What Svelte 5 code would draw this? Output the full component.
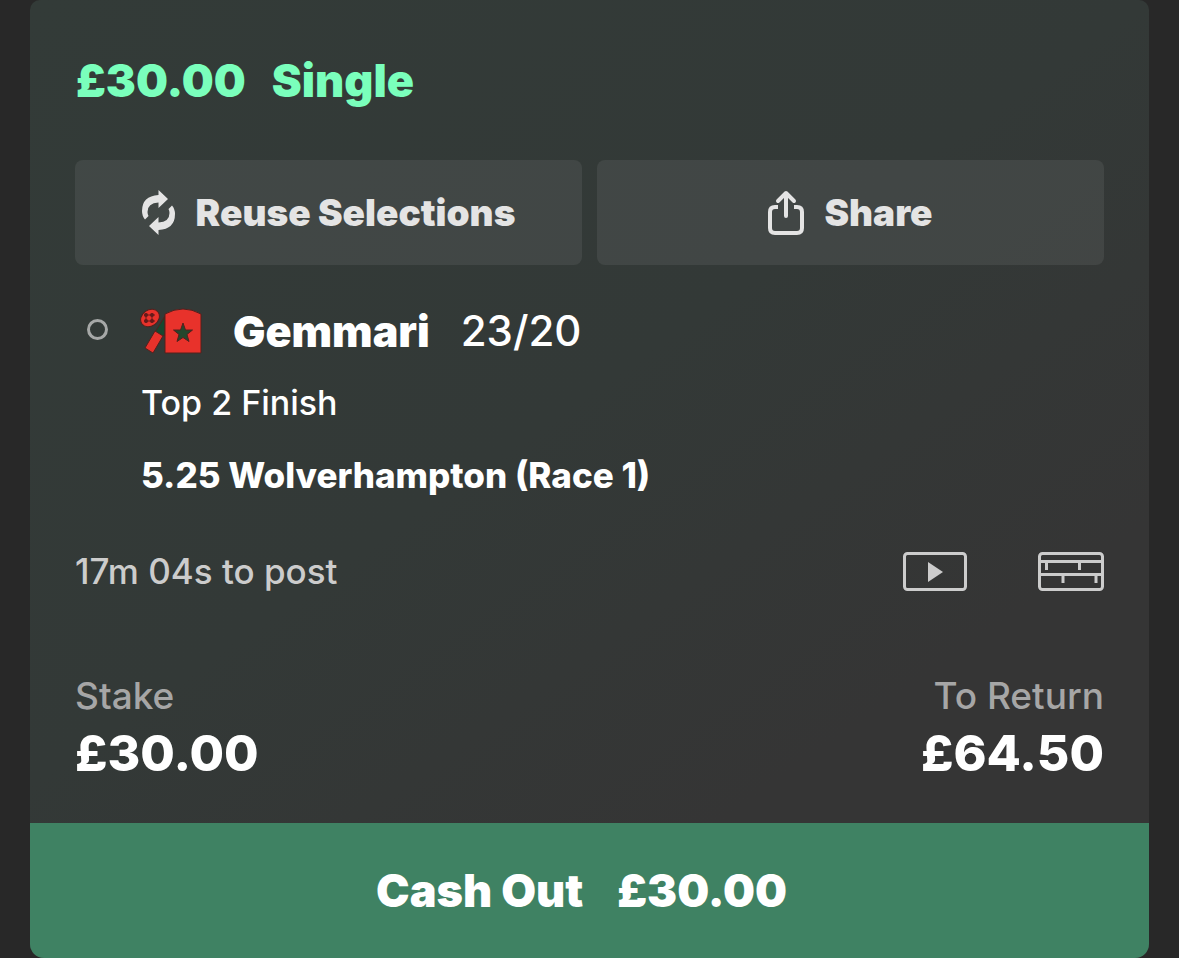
<script lang="ts">
	// Bet data
	const stake = 30;
	const toReturn = 64.5;
	const cashOut = 30;

	const selection = {
		name: 'Gemmari',
		odds: '23/20',
		market: 'Top 2 Finish',
		event: '5.25 Wolverhampton (Race 1)',
		countdown: '17m 04s to post'
	};

	function money(value: number) {
		return '£' + value.toFixed(2);
	}
</script>

<article class="bet">
	<div class="body">
		<h1>
			<span>{money(stake)}</span>
			<span>Single</span>
		</h1>

		<div class="actions">
			<button class="action">
				<svg width="34" height="46" viewBox="0 0 34 46" aria-hidden="true">
					<path
						d="M16.5 0 26 9 16.5 18V12.5Q5.500 13 5.500 22Q5.500 24 6.500 26L3 29.5Q0 26 0 21Q0 6 16.500 5Z"
						fill="currentColor"
					/>
					<path
						d="M16.5 0 26 9 16.5 18V12.5Q5.500 13 5.500 22Q5.500 24 6.500 26L3 29.5Q0 26 0 21Q0 6 16.500 5Z"
						fill="currentColor"
						transform="rotate(180 16.5 22.5)"
					/>
				</svg>
				Reuse Selections
			</button>
			<button class="action">
				<svg width="36" height="46" viewBox="0 0 36 46" aria-hidden="true">
					<g fill="none" stroke="currentColor" stroke-width="4">
						<path d="M10 17H7Q2 17 2 22V38Q2 43 7 43H29Q34 43 34 38V22Q34 17 29 17H26" />
						<path d="M18 26V3M10 11 18 3 26 11" stroke-linecap="round" stroke-linejoin="round" />
					</g>
				</svg>
				Share
			</button>
		</div>

		<div class="selection">
			<span class="marker"></span>
			<div class="details">
				<h2>
					<svg width="62" height="46" viewBox="0 0 62 46" aria-hidden="true">
						<g stroke="#54201d" stroke-width="1">
							<path d="M25 8 15 24 20 29 25 27Z" fill="#17472f" />
							<path d="M15 23 23 28 13 45 5 40Z" fill="#e8322b" />
							<path d="M25 6Q34 1 43 1T61 6V45H25Z" fill="#e8322b" />
							<ellipse cx="10" cy="10" rx="10" ry="8" transform="rotate(-35 10 10)" fill="#e8322b" />
						</g>
						<g fill="#641b1b">
							<circle cx="6" cy="7" r="2" />
							<circle cx="12" cy="7" r="2" />
							<circle cx="6" cy="13" r="2" />
							<circle cx="12" cy="13" r="2" />
							<path d="M4 7H15M4 13H15M6 5V15M12 5V15" stroke="#641b1b" />
						</g>
						<path
							d="M43 15 45.5 22 52.5 22 47 26.5 49 33.5 43 29.5 37 33.5 39 26.5 33.5 22 40.5 22Z"
							fill="#24472d"
							stroke="#54201d"
						/>
					</svg>
					<span class="name">{selection.name}</span>
					<span class="odds">{selection.odds}</span>
				</h2>
				<p class="market">{selection.market}</p>
				<p class="event">{selection.event}</p>
			</div>
		</div>

		<div class="post">
			<span>{selection.countdown}</span>
			<div class="links">
				<button aria-label="Watch live">
					<svg width="64" height="39" viewBox="0 0 64 39">
						<rect x="1.5" y="1.5" width="61" height="36" rx="3" fill="none" stroke="currentColor" stroke-width="3" />
						<path d="M25 10V30L40 20Z" fill="currentColor" />
					</svg>
				</button>
				<button aria-label="Race view">
					<svg width="66" height="39" viewBox="0 0 66 39">
						<g fill="none" stroke="currentColor" stroke-width="3">
							<rect x="1.5" y="1.5" width="63" height="36" rx="3" />
							<path d="M2 9.5H64M2 22.5H64M8.5 10V18M41.5 10V18M25 23V31M58 23V31" />
						</g>
					</svg>
				</button>
			</div>
		</div>

		<dl class="totals">
			<div>
				<dt>Stake</dt>
				<dd>{money(stake)}</dd>
			</div>
			<div class="return">
				<dt>To Return</dt>
				<dd>{money(toReturn)}</dd>
			</div>
		</dl>
	</div>

	<button class="cash-out">
		<span>Cash Out</span>
		<span>{money(cashOut)}</span>
	</button>
</article>

<style>
	:global(body) {
		background: #282828;
	}

	.bet {
		margin: 0 30px;
		border-radius: 10px 10px 14px 14px;
		overflow: hidden;
		color: #fff;
		background: linear-gradient(145deg, #333b38 0%, #333937 45%, #353535 75%);
		font-family: Inter, 'Liberation Sans', sans-serif;
	}

	.body {
		padding: 51px 45px 36px;
	}

	h1,
	h2,
	p,
	dl,
	dd {
		margin: 0;
	}

	button {
		padding: 0;
		border: none;
		background: none;
		color: inherit;
		font-family: inherit;
		cursor: pointer;
	}

	svg {
		display: block;
		flex: none;
	}

	h1 {
		display: flex;
		gap: 26px;
		padding-left: 1px;
		color: #7affbc;
		font-size: 45px;
		font-weight: 900;
		line-height: 60px;
	}

	.actions {
		display: grid;
		grid-template-columns: 1fr 1fr;
		gap: 15px;
		margin-top: 49px;
	}

	.action {
		display: flex;
		align-items: center;
		justify-content: center;
		gap: 20px;
		height: 105px;
		border-radius: 8px;
		background: rgba(255, 255, 255, 0.07);
		color: #e4e4e4;
		font-size: 37px;
		font-weight: 900;
	}

	.selection {
		display: flex;
		gap: 32px;
		margin-top: 36px;
		padding-left: 12px;
	}

	.marker {
		box-sizing: border-box;
		width: 21px;
		height: 21px;
		margin-top: 18px;
		border: 3px solid #a6a8a7;
		border-radius: 50%;
	}

	h2 {
		display: flex;
		align-items: center;
		gap: 31px;
		font-size: 43px;
		line-height: 60px;
	}

	.name {
		font-weight: 900;
	}

	.odds {
		font-size: 42px;
		font-weight: 500;
	}

	.market,
	.event {
		padding-left: 1px;
		line-height: 48px;
	}

	.market {
		margin-top: 18px;
		font-size: 34px;
		font-weight: 500;
	}

	.event {
		margin-top: 24px;
		font-size: 35px;
		font-weight: 800;
	}

	.post {
		display: flex;
		align-items: center;
		justify-content: space-between;
		margin-top: 48px;
		color: #ccc;
		font-size: 35px;
		font-weight: 500;
		line-height: 48px;
	}

	.links {
		display: flex;
		gap: 71px;
	}

	.totals {
		display: flex;
		justify-content: space-between;
		margin-top: 77px;
	}

	.return {
		text-align: right;
	}

	dt {
		color: #a6a6a6;
		font-size: 37px;
		font-weight: 500;
		line-height: 48px;
	}

	dd {
		font-size: 50px;
		font-weight: 800;
		line-height: 67px;
	}

	.cash-out {
		display: flex;
		align-items: center;
		justify-content: center;
		gap: 34px;
		width: 100%;
		height: 135px;
		padding-right: 16px;
		background: #3f8263;
		font-size: 45px;
		font-weight: 900;
	}
</style>
